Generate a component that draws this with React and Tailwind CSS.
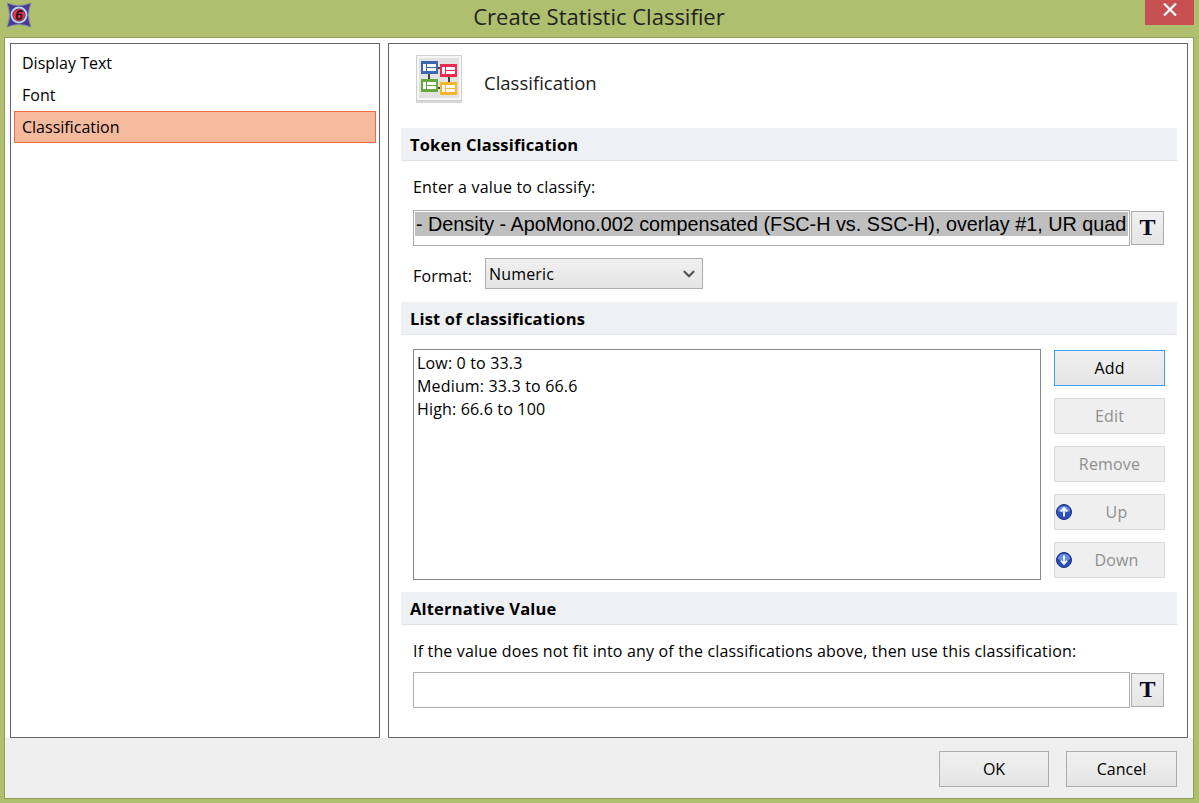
import { ChevronDown } from "lucide-react";

const sans = { fontFamily: '"Open Sans", "Noto Sans", sans-serif' };

function AppIcon() {
    return (
        <svg width="30" height="30" viewBox="0 0 30 30" className="ml-[4px] shrink-0">
            <path d="M3 3 Q15 8 27 3 Q22 15 27 27 Q15 22 3 27 Q8 15 3 3Z" fill="#4a3a94" stroke="#7d8aa8" />
            <circle cx="15" cy="15" r="7.5" fill="#2b2350" stroke="#b9d3ee" strokeWidth="2" />
            <circle cx="15" cy="15" r="6" fill="#e8344e" />
            <text x="15" y="20" textAnchor="middle" fontSize="14" fontWeight="700" fontStyle="italic" fill="#2a1020" fontFamily="Liberation Sans">6</text>
        </svg>
    );
}

function ClassificationIcon() {
    const box = (x, y, color) => (
        <g>
            <rect x={x} y={y} width="17" height="13" fill={color} />
            <rect x={x + 2} y={y + 3} width="3" height="7" fill="#fff" />
            <rect x={x + 6} y={y + 3} width="9" height="3" fill="#fff" />
            <rect x={x + 6} y={y + 7} width="9" height="3" fill="#fff" />
        </g>
    );
    return (
        <svg width="46" height="48" viewBox="0 0 46 48" className="shrink-0">
            <rect x="0" y="44" width="46" height="4" fill="#d8d8d8" />
            <rect x="0.5" y="0.5" width="45" height="45" fill="#f6f6f6" stroke="#cfcfcf" />
            <rect x="3" y="3" width="40" height="40" fill="#e2e2e2" />
            <path d="M13 18V26M21 13h5M33 21v8M21 33h5" stroke="#444" strokeWidth="2" />
            {box(5, 6, "#3c66ad")}
            {box(24, 9, "#ee2a4f")}
            {box(5, 24, "#66a83c")}
            {box(24, 27, "#f7b52c")}
        </svg>
    );
}

function ArrowIcon({ down }) {
    return (
        <svg width="16" height="16" viewBox="0 0 16 16" className="absolute left-[1px] top-[9px]">
            <circle cx="8" cy="8" r="7.5" fill="#2a50b8" stroke="#1b2f80" />
            <path d="M2 7 A6 5 0 0 1 14 7 Q8 10 2 7Z" fill="#6d8fe0" />
            <path d={down ? "M8 3.5V12M4.8 8.5 8 12l3.2-3.5" : "M8 12.5V4M4.8 7.5 8 4l3.2 3.5"} stroke="#fff" strokeWidth="1.8" fill="none" />
        </svg>
    );
}

function SectionHeader({ children }) {
    return (
        <div className="h-[33px] bg-[#eff0f4] border-b border-[#e2e3e8] pl-[9px] pt-[3px] flex items-center text-[16.5px] font-bold text-black">
            {children}
        </div>
    );
}

function TButton() {
    return (
        <button className="w-[33px] h-[34px] ml-px pb-[2px] border border-[#adadad] bg-gradient-to-b from-[#f0f0f0] to-[#e5e5e5] flex items-center justify-center text-[24px] font-bold leading-none text-[#0a0a1e]" style={{ fontFamily: '"Liberation Serif", serif' }}>
            T
        </button>
    );
}

function SideButton({ label, active, icon }) {
    if (active) {
        return (
            <button className="relative w-[111px] h-[36px] pb-px border border-[#3c9dfa] bg-gradient-to-b from-[#f0f0f0] to-[#e5e5e5] text-black text-[16px]">
                {label}
            </button>
        );
    }
    return (
        <button className="relative w-[111px] h-[36px] pb-px border border-[#d9d9d9] bg-[#efefef] text-[#8f8f8f] text-[16px]">
            {icon && <ArrowIcon down={icon === "down"} />}
            <span className={icon ? "pl-[14px]" : ""}>{label}</span>
        </button>
    );
}

export default function App() {
    return (
        <div className="w-[1199px] h-[803px] bg-[#afbf6e] flex flex-col overflow-hidden" style={sans}>
            {/* title bar */}
            <div className="h-[37px] flex shrink-0">
                <AppIcon />
                <div className="flex-1 text-center text-[22px] text-[#222] pl-[19px]">Create Statistic Classifier</div>
                <div className="w-[49px] h-[25px] pb-[7px] bg-[#c75050] flex items-center justify-center mr-[5px] shrink-0">
                    <svg width="14" height="13" viewBox="0 0 14 13">
                        <path d="M1 0.5 13 12.5M13 0.5 1 12.5" stroke="#fff" strokeWidth="2.2" />
                    </svg>
                </div>
            </div>

            {/* client area */}
            <div className="ml-[4px] mr-[5px] h-[762px] border border-[#929f5c] bg-white flex flex-col shrink-0">
                <div className="flex h-[700px] pl-[5px] pt-[5px] pr-[5px] gap-[8px] shrink-0">
                    {/* left nav */}
                    <div className="w-[370px] h-[695px] border border-[#646464] pt-[3px] px-[3px] text-[16px] text-black shrink-0">
                        <div className="h-[32px] pl-[8px] flex items-center">Display Text</div>
                        <div className="h-[32px] pl-[8px] flex items-center">Font</div>
                        <div className="h-[32px] pl-[7px] flex items-center bg-[#f5b99d] border border-[#ee6b45]">Classification</div>
                    </div>

                    {/* right panel */}
                    <div className="w-[800px] h-[695px] border border-[#646464] pl-[12px] pr-[10px] text-[16px] tracking-[0.17px] text-black shrink-0">
                        <div className="h-[84px] flex items-start pl-[15px] pt-[11px]">
                            <ClassificationIcon />
                            <span className="ml-[22px] mt-[14px] text-[18.5px] tracking-normal text-[#1a1a1a]">Classification</span>
                        </div>

                        <SectionHeader>Token Classification</SectionHeader>
                        <div className="pl-[12px] pr-[13px]">
                            <div className="h-[49px] pt-[15px] leading-[22px]">Enter a value to classify:</div>
                            <div className="flex items-center">
                                <div className="flex-1 h-[36px] border border-[#adadad] px-px pt-px overflow-hidden">
                                    <div className="h-[24px] bg-[#bfbfbf] pl-px whitespace-nowrap overflow-hidden text-[19.8px] tracking-normal leading-[24px] text-black" style={{ fontFamily: '"Liberation Sans", sans-serif' }}>
                                        - Density - ApoMono.002 compensated (FSC-H vs. SSC-H), overlay #1, UR quad
                                    </div>
                                </div>
                                <TButton />
                            </div>
                            <div className="flex items-center mt-[12px] h-[31px]">
                                <span className="w-[72px] pt-[5px]">Format:</span>
                                <div className="w-[218px] h-[31px] border border-[#adadad] bg-gradient-to-b from-[#f0f0f0] to-[#e5e5e5] flex items-center justify-between pl-[3px] pr-[4px]">
                                    <span>Numeric</span>
                                    <ChevronDown size={18} strokeWidth={3} className="text-[#555]" />
                                </div>
                            </div>
                        </div>

                        <div className="mt-[13px]">
                            <SectionHeader>List of classifications</SectionHeader>
                        </div>
                        <div className="flex pl-[12px] pt-[14px] h-[257px]">
                            <div className="w-[628px] h-[231px] border border-[#828790] pl-[3px] pt-[2px] leading-[23px] shrink-0">
                                <div>Low: 0 to 33.3</div>
                                <div>Medium: 33.3 to 66.6</div>
                                <div>High: 66.6 to 100</div>
                            </div>
                            <div className="ml-[13px] pt-px flex flex-col gap-[12px]">
                                <SideButton label="Add" active />
                                <SideButton label="Edit" />
                                <SideButton label="Remove" />
                                <SideButton label="Up" icon="up" />
                                <SideButton label="Down" icon="down" />
                            </div>
                        </div>

                        <SectionHeader>Alternative Value</SectionHeader>
                        <div className="pl-[12px] pr-[13px]">
                            <div className="h-[47px] pt-[15px] leading-[22px] whitespace-nowrap">If the value does not fit into any of the classifications above, then use this classification:</div>
                            <div className="flex items-center">
                                <div className="flex-1 h-[36px] border border-[#adadad]" />
                                <TButton />
                            </div>
                        </div>
                    </div>
                </div>

                {/* footer */}
                <div className="flex-1 bg-[#efefef] flex justify-end items-start pt-[13px] pr-[16px] gap-[17px] text-[16px] text-black">
                    <button className="w-[110px] h-[36px] pb-px border border-[#adadad] bg-gradient-to-b from-[#f0f0f0] to-[#e5e5e5]">OK</button>
                    <button className="w-[111px] h-[36px] pb-px border border-[#adadad] bg-gradient-to-b from-[#f0f0f0] to-[#e5e5e5]">Cancel</button>
                </div>
            </div>
        </div>
    );
}
